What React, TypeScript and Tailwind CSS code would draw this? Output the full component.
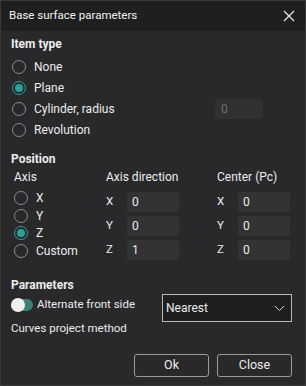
import React from "react";

function Radio({ checked, label, className = "" }: { checked?: boolean; label: string; className?: string }) {
  return (
    <div className={`flex items-center ${className}`}>
      <div
        className={`w-[14px] h-[14px] rounded-full border flex items-center justify-center ${
          checked ? "border-[#2aa198]" : "border-[#8c8c8c]"
        }`}
      >
        {checked && <div className="w-[8px] h-[8px] rounded-full bg-[#2aa198]" />}
      </div>
      <span className="ml-[8px] text-[12px] leading-none">{label}</span>
    </div>
  );
}

function Field({ label, value }: { label: string; value: string }) {
  return (
    <div className="flex items-center h-[20px]">
      <span className="w-[21px] text-[11.5px]">{label}</span>
      <div className="w-[52px] h-[20px] rounded-[3px] bg-[#333335] flex items-center pl-[5px] text-[12px]">{value}</div>
    </div>
  );
}

export default function App() {
  return (
    <div
      className="w-[306px] h-[386px] bg-[#29292b] text-[#ececec] border border-[#3a3a3a] flex flex-col"
      style={{ fontFamily: "Roboto, 'Liberation Sans', sans-serif" }}
    >
      <div className="h-[30px] bg-[#1f1f1f] flex items-center justify-between pl-[8px] pr-[10px] shrink-0">
        <span className="text-[11.5px] text-[#f2f2f2]">Base surface parameters</span>
        <svg width="12" height="12" viewBox="0 0 12 12">
          <path d="M1 1L11 11M11 1L1 11" stroke="#e8e8e8" strokeWidth="1.2" />
        </svg>
      </div>

      <div className="px-[10px] pt-[5px] flex flex-col">
        <div className="text-[12px] font-bold h-[16px] leading-[16px]">Item type</div>
        <div className="flex flex-col gap-[7px] mt-[8px] pl-[1px]">
          <Radio label="None" />
          <Radio label="Plane" checked />
          <div className="flex items-center justify-between h-[14px]">
            <Radio label="Cylinder, radius" />
            <div className="w-[48px] h-[20px] rounded-[3px] bg-[#313133] mr-[32px] flex items-center pl-[6px] text-[12px] text-[#6e6e70]">
              0
            </div>
          </div>
          <Radio label="Revolution" />
        </div>

        <div className="text-[12px] font-bold mt-[14px] h-[16px] leading-[16px]">Position</div>
        <div className="flex mt-[2px]">
          <div className="w-[94px] flex flex-col pl-[3px]">
            <div className="text-[12px] h-[16px] leading-[16px]">Axis</div>
            <div className="flex flex-col gap-[3.7px] mt-[6px]">
              <Radio label="X" />
              <Radio label="Y" />
              <Radio label="Z" checked />
              <Radio label="Custom" />
            </div>
          </div>
          <div className="w-[112px] flex flex-col pl-[1px]">
            <div className="text-[12px] h-[16px] leading-[16px]">Axis direction</div>
            <div className="flex flex-col gap-[4px] mt-[7px]">
              <Field label="X" value="0" />
              <Field label="Y" value="0" />
              <Field label="Z" value="1" />
            </div>
          </div>
          <div className="flex flex-col">
            <div className="text-[12px] h-[16px] leading-[16px]">Center (Pc)</div>
            <div className="flex flex-col gap-[4px] mt-[7px]">
              <Field label="X" value="0" />
              <Field label="Y" value="0" />
              <Field label="Z" value="0" />
            </div>
          </div>
        </div>

        <div className="text-[12px] font-bold mt-[17px] h-[16px] leading-[16px]">Parameters</div>
        <div className="flex justify-between">
          <div className="flex flex-col">
            <div className="flex items-center mt-[4px] h-[16px]">
              <div className="w-[22px] h-[12px] rounded-full bg-[#3f7f78] relative">
                <div className="absolute left-0 top-[-1px] w-[14px] h-[14px] rounded-full bg-[#f0f0f0]" />
              </div>
              <span className="ml-[4px] text-[11.5px]">Alternate front side</span>
            </div>
            <div className="text-[11.5px] mt-[7px]">Curves project method</div>
          </div>
          <div className="w-[130px] h-[28px] mt-[1px] mr-[3px] border border-[#b8b8b8] bg-[#1e1e1e] flex items-center justify-between pl-[3px] pr-[6px]">
            <span className="text-[12px]">Nearest</span>
            <svg width="11" height="7" viewBox="0 0 11 7">
              <path d="M1 1L5.5 5.5L10 1" stroke="#cfcfcf" strokeWidth="1" fill="none" />
            </svg>
          </div>
        </div>

        <div className="flex justify-end gap-[8px] mt-[17px] pr-[3px]">
          <div className="w-[75px] h-[23px] border border-[#9a9a9a] rounded-[3px] flex items-center justify-center text-[12.5px]">
            Ok
          </div>
          <div className="w-[75px] h-[23px] border border-[#9a9a9a] rounded-[3px] flex items-center justify-center text-[12.5px]">
            Close
          </div>
        </div>
      </div>
    </div>
  );
}
